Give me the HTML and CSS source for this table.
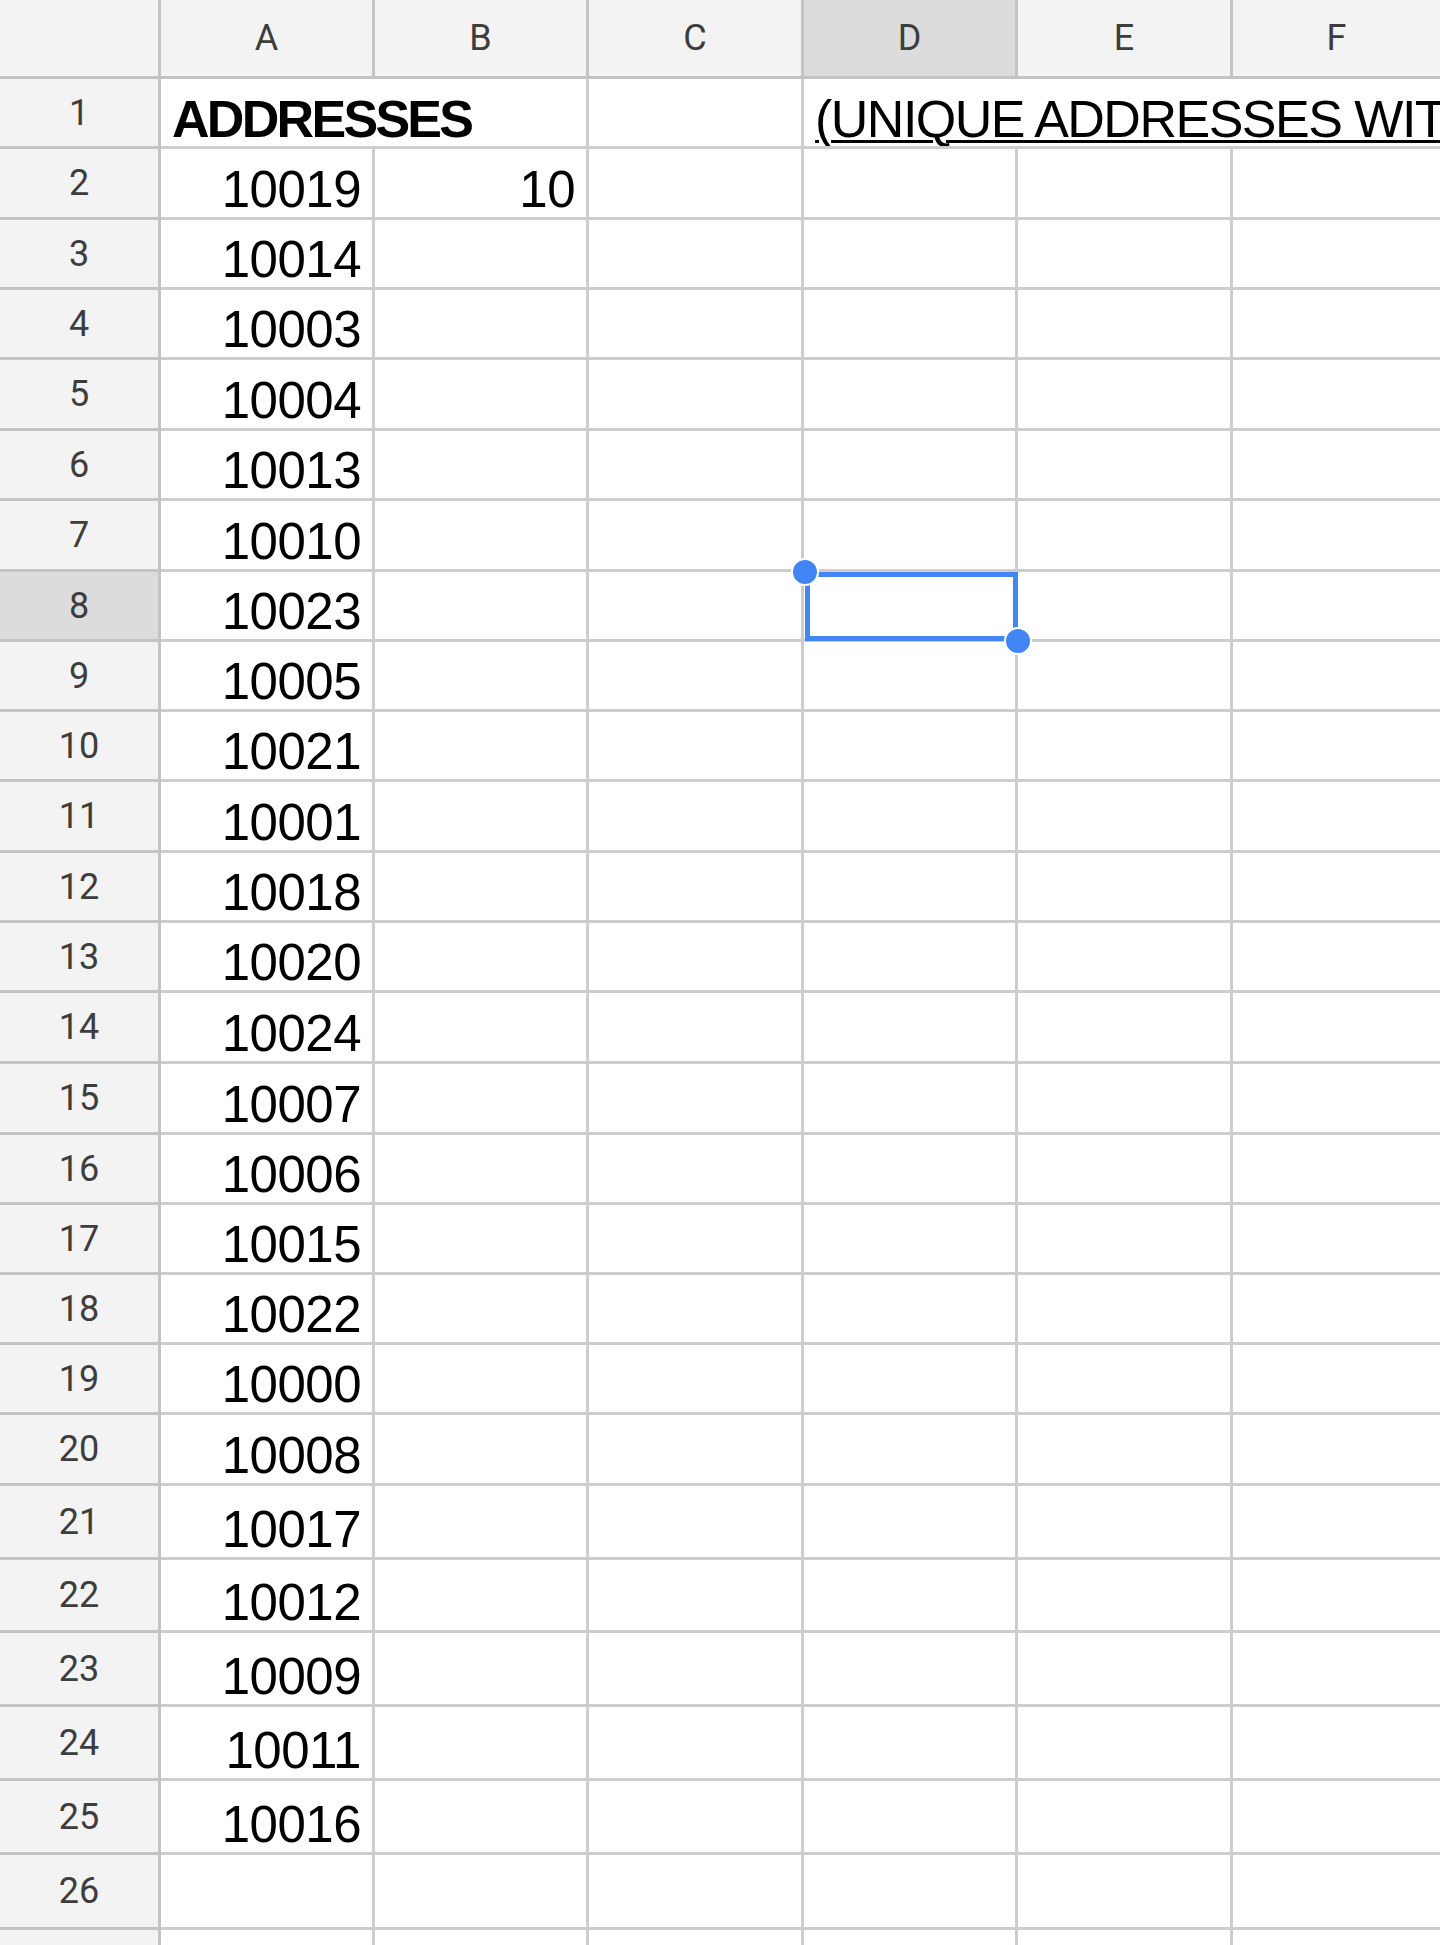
FILE: index.html
```html
<!DOCTYPE html>
<html lang="en">
<head>
<meta charset="utf-8">
<title>Sheet</title>
<link rel="stylesheet" href="styles.css">
</head>
<body>
<div class="sheet">
  <div class="row r-head">
    <div class="cell corner"></div>
    <div class="cell hd">A</div>
    <div class="cell hd">B</div>
    <div class="cell hd">C</div>
    <div class="cell hd hd-sel">D</div>
    <div class="cell hd">E</div>
    <div class="cell hd">F</div>
  </div>
  <div class="row r70">
    <div class="cell rn">1</div>
    <div class="cell span2 title">ADDRESSES</div>
    <div class="cell"></div>
    <div class="cell span3 caption">(UNIQUE ADDRESSES WITH TOTAL COUNT)</div>
  </div>
  <div class="row r71">
    <div class="cell rn">2</div>
    <div class="cell num">10019</div>
    <div class="cell num">10</div>
    <div class="cell"></div><div class="cell"></div><div class="cell"></div><div class="cell"></div>
  </div>
  <div class="row r70">
    <div class="cell rn">3</div><div class="cell num">10014</div>
    <div class="cell"></div><div class="cell"></div><div class="cell"></div><div class="cell"></div><div class="cell"></div>
  </div>
  <div class="row r70">
    <div class="cell rn">4</div><div class="cell num">10003</div>
    <div class="cell"></div><div class="cell"></div><div class="cell"></div><div class="cell"></div><div class="cell"></div>
  </div>
  <div class="row r71">
    <div class="cell rn">5</div><div class="cell num">10004</div>
    <div class="cell"></div><div class="cell"></div><div class="cell"></div><div class="cell"></div><div class="cell"></div>
  </div>
  <div class="row r70">
    <div class="cell rn">6</div><div class="cell num">10013</div>
    <div class="cell"></div><div class="cell"></div><div class="cell"></div><div class="cell"></div><div class="cell"></div>
  </div>
  <div class="row r71">
    <div class="cell rn">7</div><div class="cell num">10010</div>
    <div class="cell"></div><div class="cell"></div><div class="cell"></div><div class="cell"></div><div class="cell"></div>
  </div>
  <div class="row r70">
    <div class="cell rn rn-sel">8</div><div class="cell num">10023</div>
    <div class="cell"></div><div class="cell"></div>
    <div class="cell active">
      <div class="selection"></div>
      <div class="handle handle-tl"></div>
      <div class="handle handle-br"></div>
    </div>
    <div class="cell"></div><div class="cell"></div>
  </div>
  <div class="row r70">
    <div class="cell rn">9</div><div class="cell num">10005</div>
    <div class="cell"></div><div class="cell"></div><div class="cell"></div><div class="cell"></div><div class="cell"></div>
  </div>
  <div class="row r70">
    <div class="cell rn">10</div><div class="cell num">10021</div>
    <div class="cell"></div><div class="cell"></div><div class="cell"></div><div class="cell"></div><div class="cell"></div>
  </div>
  <div class="row r71">
    <div class="cell rn">11</div><div class="cell num">10001</div>
    <div class="cell"></div><div class="cell"></div><div class="cell"></div><div class="cell"></div><div class="cell"></div>
  </div>
  <div class="row r70">
    <div class="cell rn">12</div><div class="cell num">10018</div>
    <div class="cell"></div><div class="cell"></div><div class="cell"></div><div class="cell"></div><div class="cell"></div>
  </div>
  <div class="row r70">
    <div class="cell rn">13</div><div class="cell num">10020</div>
    <div class="cell"></div><div class="cell"></div><div class="cell"></div><div class="cell"></div><div class="cell"></div>
  </div>
  <div class="row r71">
    <div class="cell rn">14</div><div class="cell num">10024</div>
    <div class="cell"></div><div class="cell"></div><div class="cell"></div><div class="cell"></div><div class="cell"></div>
  </div>
  <div class="row r71">
    <div class="cell rn">15</div><div class="cell num">10007</div>
    <div class="cell"></div><div class="cell"></div><div class="cell"></div><div class="cell"></div><div class="cell"></div>
  </div>
  <div class="row r70">
    <div class="cell rn">16</div><div class="cell num">10006</div>
    <div class="cell"></div><div class="cell"></div><div class="cell"></div><div class="cell"></div><div class="cell"></div>
  </div>
  <div class="row r70">
    <div class="cell rn">17</div><div class="cell num">10015</div>
    <div class="cell"></div><div class="cell"></div><div class="cell"></div><div class="cell"></div><div class="cell"></div>
  </div>
  <div class="row r70">
    <div class="cell rn">18</div><div class="cell num">10022</div>
    <div class="cell"></div><div class="cell"></div><div class="cell"></div><div class="cell"></div><div class="cell"></div>
  </div>
  <div class="row r70">
    <div class="cell rn">19</div><div class="cell num">10000</div>
    <div class="cell"></div><div class="cell"></div><div class="cell"></div><div class="cell"></div><div class="cell"></div>
  </div>
  <div class="row r71">
    <div class="cell rn">20</div><div class="cell num">10008</div>
    <div class="cell"></div><div class="cell"></div><div class="cell"></div><div class="cell"></div><div class="cell"></div>
  </div>
  <div class="row r74">
    <div class="cell rn">21</div><div class="cell num">10017</div>
    <div class="cell"></div><div class="cell"></div><div class="cell"></div><div class="cell"></div><div class="cell"></div>
  </div>
  <div class="row r73">
    <div class="cell rn">22</div><div class="cell num">10012</div>
    <div class="cell"></div><div class="cell"></div><div class="cell"></div><div class="cell"></div><div class="cell"></div>
  </div>
  <div class="row r74">
    <div class="cell rn">23</div><div class="cell num">10009</div>
    <div class="cell"></div><div class="cell"></div><div class="cell"></div><div class="cell"></div><div class="cell"></div>
  </div>
  <div class="row r74">
    <div class="cell rn">24</div><div class="cell num">10011</div>
    <div class="cell"></div><div class="cell"></div><div class="cell"></div><div class="cell"></div><div class="cell"></div>
  </div>
  <div class="row r74">
    <div class="cell rn">25</div><div class="cell num">10016</div>
    <div class="cell"></div><div class="cell"></div><div class="cell"></div><div class="cell"></div><div class="cell"></div>
  </div>
  <div class="row r75">
    <div class="cell rn">26</div><div class="cell"></div>
    <div class="cell"></div><div class="cell"></div><div class="cell"></div><div class="cell"></div><div class="cell"></div>
  </div>
  <div class="row r-tail">
    <div class="cell rn"></div><div class="cell"></div>
    <div class="cell"></div><div class="cell"></div><div class="cell"></div><div class="cell"></div><div class="cell"></div>
  </div>
</div>
</body>
</html>
```

FILE: styles.css
```css
html, body {
  margin: 0;
  padding: 0;
  background: #ffffff;
  overflow: hidden;
}

body {
  width: 1440px;
  height: 1945px;
}

.sheet {
  width: 1440px;
}

.row {
  display: grid;
  grid-template-columns: 161px 214px 214px 215px 214px 215px 1fr;
}

.r-head { height: 79px; }
.r70 { height: 70px; }
.r71 { height: 71px; }
.r73 { height: 73px; }
.r74 { height: 74px; }
.r75 { height: 75px; }
.r-tail { height: 15px; }

.cell {
  box-sizing: border-box;
  min-width: 0;
  border-right: 3px solid #cdcdcd;
  border-bottom: 3px solid #cdcdcd;
  display: flex;
  align-items: flex-end;
  justify-content: flex-end;
  padding: 0 11px 2px 11px;
  font-family: "Liberation Sans", Arial, sans-serif;
  font-size: 52px;
  line-height: 1;
  color: #000000;
  white-space: nowrap;
  overflow: hidden;
}

.num {
  font-size: 51px;
  letter-spacing: -0.5px;
  padding-right: 11px;
}

.r-tail .cell {
  border-bottom: none;
}

.row > .cell:last-child {
  border-right: none;
}

.span2 { grid-column: span 2; }
.span3 { grid-column: span 3; }

.corner,
.hd,
.rn {
  background: #f3f3f3;
  border-color: #c4c4c4;
  font-family: Roboto, "Liberation Sans", sans-serif;
  color: #3d3d3d;
  align-items: center;
  justify-content: center;
  padding: 0;
  line-height: normal;
}

.hd { font-size: 36px; }
.rn { font-size: 36px; }

.hd-sel,
.rn-sel {
  background: #dcdcdc;
}

.title {
  justify-content: flex-start;
  font-weight: 700;
  letter-spacing: -2.7px;
  padding-bottom: 1px;
}

.caption {
  justify-content: flex-start;
  letter-spacing: -1.5px;
  padding-bottom: 1px;
  text-decoration: underline;
  text-decoration-thickness: 3px;
  text-underline-offset: 3px;
}

.active {
  position: relative;
  overflow: visible;
}

.selection {
  position: absolute;
  left: 1px;
  top: 0;
  width: 213px;
  height: 69px;
  box-sizing: border-box;
  border: 5px solid #4285f4;
  z-index: 2;
}

.handle {
  position: absolute;
  width: 24px;
  height: 24px;
  border-radius: 50%;
  background: #4285f4;
  border: 2px solid #ffffff;
  z-index: 3;
}

.handle-tl {
  left: -13px;
  top: -14px;
}

.handle-br {
  left: 200px;
  top: 55px;
}
```
